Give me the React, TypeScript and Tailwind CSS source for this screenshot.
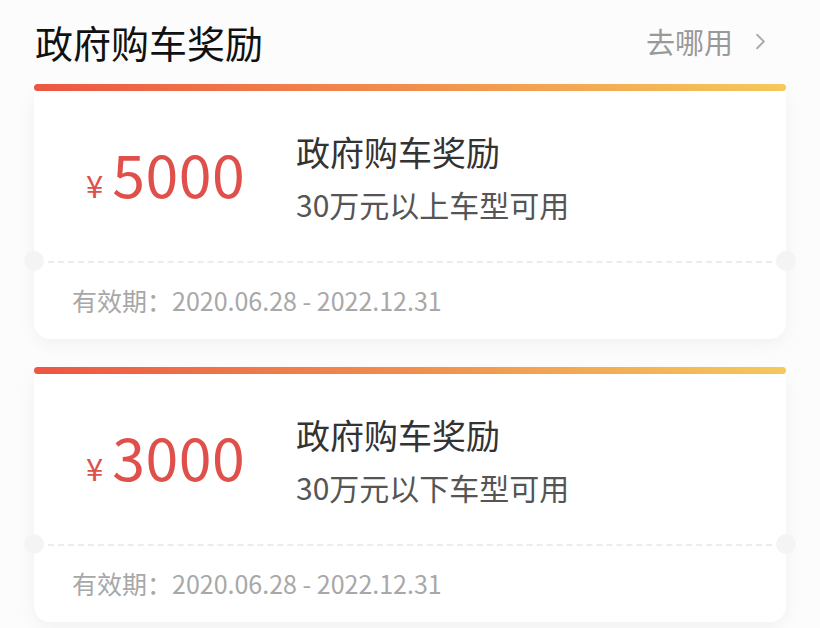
import { ChevronRight } from "lucide-react";

interface Coupon {
  id: number;
  amount: string;
  title: string;
  desc: string;
  period: string;
}

const coupons: Coupon[] = [
  { id: 1, amount: "5000", title: "政府购车奖励", desc: "30万元以上车型可用", period: "2020.06.28 - 2022.12.31" },
  { id: 2, amount: "3000", title: "政府购车奖励", desc: "30万元以下车型可用", period: "2020.06.28 - 2022.12.31" },
];

function CouponCard({ c }: { c: Coupon }) {
  return (
    <div className="relative">
      <div className="h-[7px] rounded-full bg-gradient-to-r from-[#ee5744] via-[#f3904f] to-[#f6cb5c]" />
      <div className="relative bg-white rounded-b-[16px] shadow-[0_4px_18px_rgba(0,0,0,0.05)]">
        <div className="flex items-center h-[170px] pl-[52px]">
          <div className="flex items-baseline text-[#e0504a] w-[196px]">
            <span className="text-[31px] mr-[9px]">¥</span>
            <span className="text-[59px] leading-none tracking-[0.5px]">{c.amount}</span>
          </div>
          <div className="flex flex-col gap-[12px] pl-[14px] pt-[4px]">
            <div className="text-[34px] leading-[40px] text-[#333]">{c.title}</div>
            <div className="text-[30px] leading-[40px] text-[#555]">{c.desc}</div>
          </div>
        </div>
        <div className="relative mx-[14px] border-t-2 border-dashed border-[#ececec]" />
        <div className="absolute left-[-10px] top-[160px] w-[20px] h-[20px] rounded-full bg-[#f4f4f4]" />
        <div className="absolute right-[-10px] top-[160px] w-[20px] h-[20px] rounded-full bg-[#f4f4f4]" />
        <div className="h-[76px] flex items-center pl-[38px] text-[25px] text-[#a8a8a8]">
          有效期：{c.period}
        </div>
      </div>
    </div>
  );
}

export default function App() {
  return (
    <div
      className="w-[820px] h-[628px] overflow-hidden bg-[#fcfcfc]"
      style={{ fontFamily: '"Noto Sans CJK SC", "Noto Sans", sans-serif' }}
    >
      <div className="flex items-center justify-between h-[84px] pl-[35px] pr-[46px] pb-[1px]">
        <div className="text-[38px] text-[#111] leading-none">政府购车奖励</div>
        <div className="flex items-center text-[29px] text-[#999] leading-none">
          去哪用
          <ChevronRight className="ml-[14px] w-[27px] h-[27px]" strokeWidth={1.6} color="#aaa" />
        </div>
      </div>
      <div className="flex flex-col gap-[28px] px-[34px]">
        {coupons.map((c) => (
          <CouponCard key={c.id} c={c} />
        ))}
      </div>
    </div>
  );
}
